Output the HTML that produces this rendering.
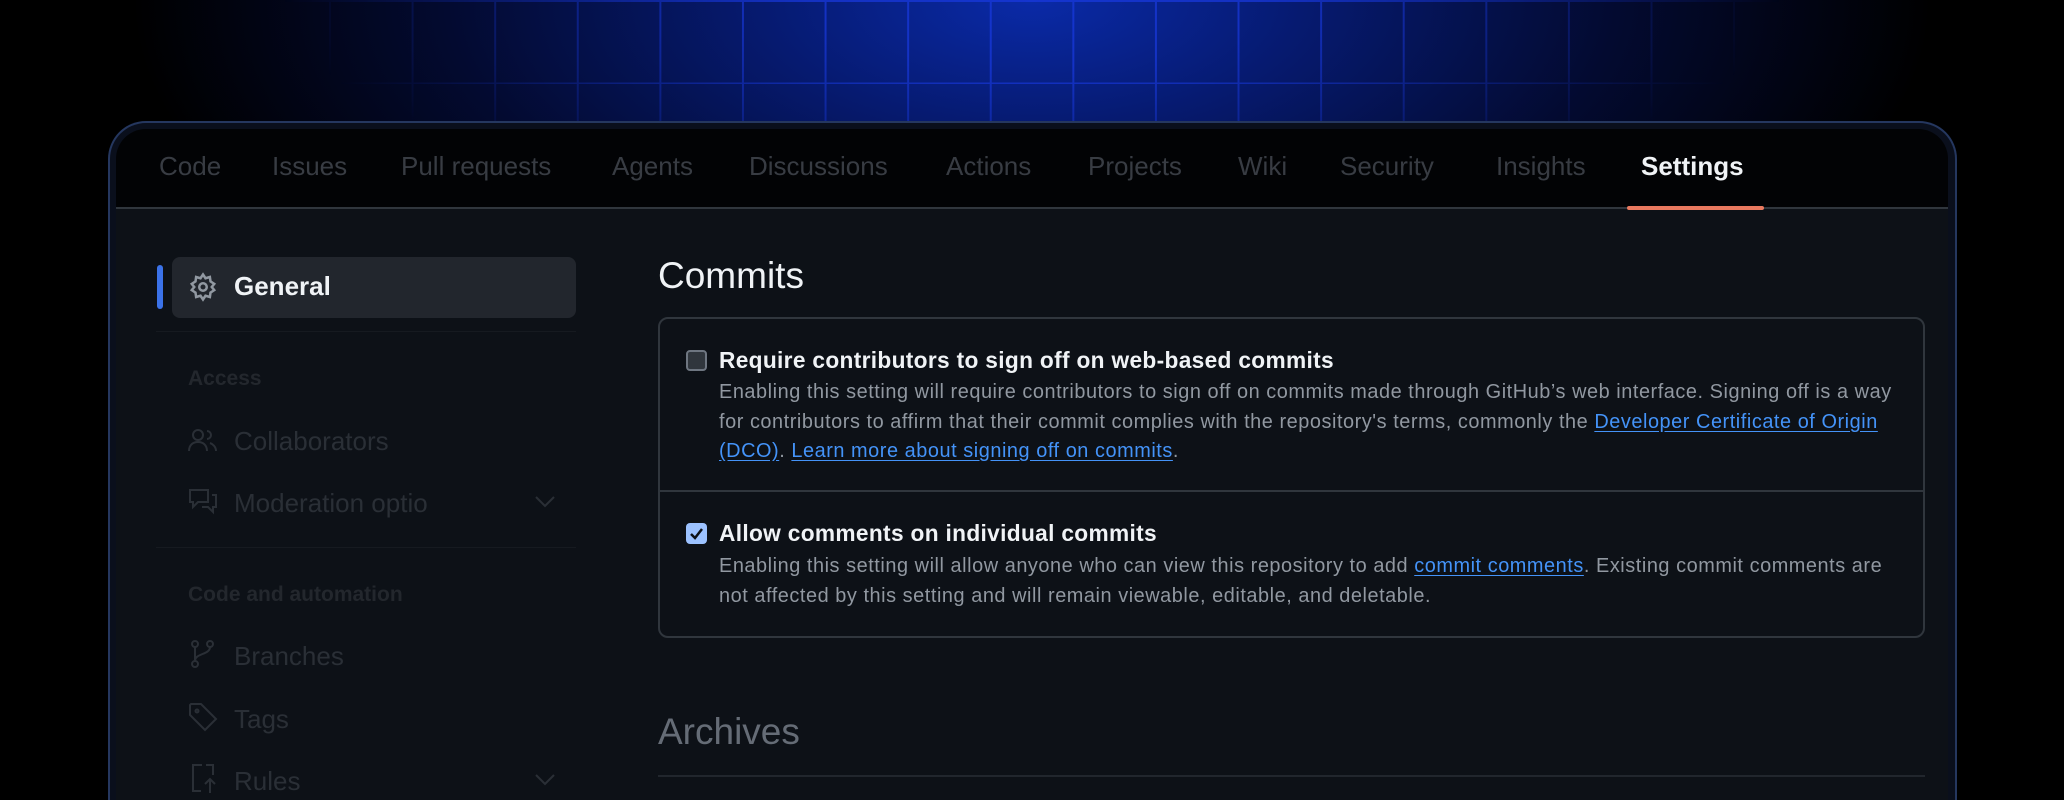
<!DOCTYPE html>
<html><head><meta charset="utf-8"><style>
*{margin:0;padding:0;box-sizing:border-box}
html,body{width:2064px;height:800px;overflow:hidden}
body{background:#000;font-family:"Liberation Sans",sans-serif;position:relative}
.glow{position:absolute;left:0;top:0;width:2064px;height:800px;background:radial-gradient(ellipse 900px 420px at 1032px 0px,#0a2aa8 0%,#061a70 30%,#030a30 65%,#000 100%)}
.grid{position:absolute;left:250px;top:0;width:1564px;height:160px;
background-image:linear-gradient(90deg,#1a3ae0 0 2px,transparent 2px),linear-gradient(#1a3ae0 0 2px,transparent 2px);
background-size:82.6px 82px;background-position:79px 0;opacity:.7;
-webkit-mask-image:radial-gradient(ellipse 750px 220px at 782px 0,#000 30%,transparent 100%)}
.frame{position:absolute;left:108px;top:121px;width:1849px;height:679px;border:2px solid #25375f;border-bottom:none;border-radius:38px 38px 0 0;background:#0a0f1c}
.panel{position:absolute;left:116px;top:129px;width:1832px;height:671px;border-radius:30px 30px 0 0;background:#0d1117;overflow:hidden}
.nav{position:absolute;left:0;top:0;width:100%;height:80px;background:#020305;border-bottom:2px solid #30363d}
.nav span{position:absolute;top:22px;font-size:26px;color:#383c43}
.nav .act{color:#f0f3f6;font-weight:bold}
.ul{position:absolute;left:1511px;top:77px;width:137px;height:4px;background:#e9795f;border-radius:2px}
.side{position:absolute;color:#2a2f36;font-size:26px}
.hd{position:absolute;color:#23272d;font-size:21px;font-weight:bold}
.gen{position:absolute;left:56px;top:128px;width:404px;height:61px;background:#22262d;border-radius:8px}
.bar{position:absolute;left:41px;top:136px;width:6px;height:44px;background:#3b72e8;border-radius:3px}
.ic{position:absolute;stroke:#2a2f36;fill:none;stroke-width:2}
.box{position:absolute;left:542px;top:188px;width:1267px;height:321px;border:2px solid #30363d;border-radius:10px}
.t{position:absolute;font-size:22.7px;font-weight:bold;color:#f0f3f6;letter-spacing:.33px}
.b{position:absolute;font-size:19.9px;color:#9198a1;line-height:29.6px;width:1182px;letter-spacing:.55px}
a{color:#4493f8;text-decoration:underline;text-underline-offset:3px}
</style></head><body>
<div class="glow"></div><div class="grid"></div>
<div class="frame"></div>
<div class="panel">
 <div class="nav">
  <span style="left:43px">Code</span><span style="left:156px">Issues</span><span style="left:285px">Pull requests</span><span style="left:496px">Agents</span><span style="left:633px">Discussions</span><span style="left:830px">Actions</span><span style="left:972px">Projects</span><span style="left:1122px">Wiki</span><span style="left:1224px">Security</span><span style="left:1380px">Insights</span><span class="act" style="left:1525px">Settings</span>
  <div class="ul"></div>
 </div>
 <div class="bar"></div><div class="gen"></div>
 <svg class="ic" style="left:72px;top:143px;stroke:#9198a1" width="30" height="30" viewBox="0 0 24 24"><circle cx="12" cy="12" r="3"/><path d="M12 2l2 3 3.5-1 .5 3.5 3 2-2 2.5 2 2.5-3 2-.5 3.5-3.5-1-2 3-2-3-3.5 1-.5-3.5-3-2 2-2.5-2-2.5 3-2 .5-3.5 3.5 1z"/></svg>
 <div class="side" style="left:118px;top:142px;color:#f0f3f6;font-weight:bold;font-size:26px">General</div>
 <div style="position:absolute;left:40px;top:202px;width:420px;height:1px;background:#161a20"></div>
 <div class="hd" style="left:72px;top:238px">Access</div>
 <svg class="ic" style="left:72px;top:298px" width="30" height="28" viewBox="0 0 30 28"><circle cx="10" cy="8" r="5"/><path d="M1 24c0-6 4-9 9-9s9 3 9 9M19 4a4 4 0 010 8M22 16c3 1 6 4 6 8"/></svg>
 <div class="side" style="left:118px;top:297px">Collaborators</div>
 <svg class="ic" style="left:72px;top:358px" width="30" height="30" viewBox="0 0 30 30"><path d="M2 3h18v12H10l-5 5v-5H2zM24 8h4v12h-3v5l-5-5h-6"/></svg>
 <div class="side" style="left:118px;top:359px">Moderation optio</div>
 <svg class="ic" style="left:418px;top:366px" width="22" height="14" viewBox="0 0 22 14"><path d="M2 2l9 9 9-9"/></svg>
 <div style="position:absolute;left:40px;top:418px;width:420px;height:1px;background:#161a20"></div>
 <div class="hd" style="left:72px;top:454px">Code and automation</div>
 <svg class="ic" style="left:74px;top:510px" width="26" height="30" viewBox="0 0 26 30"><circle cx="5" cy="5" r="3"/><circle cx="5" cy="25" r="3"/><circle cx="20" cy="5" r="3"/><path d="M5 8v14M20 8c0 8-15 6-15 14"/></svg>
 <div class="side" style="left:118px;top:512px">Branches</div>
 <svg class="ic" style="left:72px;top:573px" width="30" height="30" viewBox="0 0 30 30"><path d="M2 3v10l15 15 11-11L13 2H3z"/><circle cx="9" cy="9" r="1.5"/></svg>
 <div class="side" style="left:118px;top:575px">Tags</div>
 <svg class="ic" style="left:74px;top:634px" width="28" height="32" viewBox="0 0 28 32"><path d="M12 2H3v26h8M16 2h7v10M20 30V16m-5 5l5-5 5 5"/></svg>
 <div class="side" style="left:118px;top:637px">Rules</div>
 <svg class="ic" style="left:418px;top:644px" width="22" height="14" viewBox="0 0 22 14"><path d="M2 2l9 9 9-9"/></svg>

 <div style="position:absolute;left:542px;top:126px;font-size:37px;color:#f0f3f6">Commits</div>
 <div class="box"></div>
 <div style="position:absolute;left:570px;top:221px;width:21px;height:21px;border:2px solid #6e7681;background:#30363d;border-radius:4px"></div>
 <div class="t" style="left:603px;top:218px">Require contributors to sign off on web-based commits</div>
 <div class="b" style="left:603px;top:249px">Enabling this setting will require contributors to sign off on commits made through GitHub’s web interface. Signing off is a way for contributors to affirm that their commit complies with the repository's terms, commonly the <a>Developer Certificate of Origin (DCO)</a>. <a>Learn more about signing off on commits</a>.</div>
 <div style="position:absolute;left:544px;top:361px;width:1263px;height:2px;background:#30363d"></div>
 <div style="position:absolute;left:570px;top:394px;width:21px;height:21px;background:#9cc2ff;border-radius:4px"><svg width="21" height="21" viewBox="0 0 21 21"><path d="M5 11l4 4 7-9" stroke="#0d1117" stroke-width="2.5" fill="none"/></svg></div>
 <div class="t" style="left:603px;top:391px">Allow comments on individual commits</div>
 <div class="b" style="left:603px;top:423px">Enabling this setting will allow anyone who can view this repository to add <a>commit comments</a>. Existing commit comments are not affected by this setting and will remain viewable, editable, and deletable.</div>
 <div style="position:absolute;left:542px;top:582px;font-size:37px;color:#656c76">Archives</div>
 <div style="position:absolute;left:542px;top:646px;width:1267px;height:2px;background:#21262d"></div>
</div>
</body></html>
